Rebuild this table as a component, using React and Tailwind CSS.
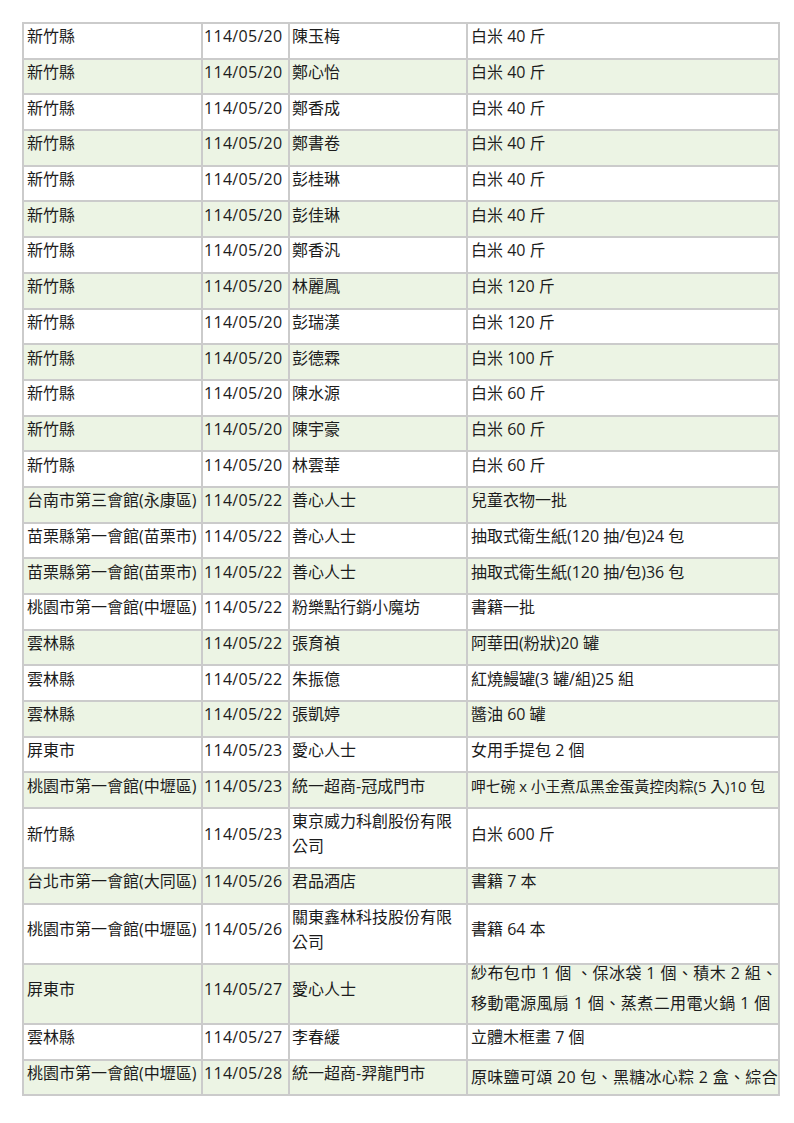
import React from 'react';

const rows = [
  { c: ['新竹縣', '114/05/20', '陳玉梅', '白米 40 斤'] },
  { c: ['新竹縣', '114/05/20', '鄭心怡', '白米 40 斤'] },
  { c: ['新竹縣', '114/05/20', '鄭香成', '白米 40 斤'] },
  { c: ['新竹縣', '114/05/20', '鄭書卷', '白米 40 斤'] },
  { c: ['新竹縣', '114/05/20', '彭桂琳', '白米 40 斤'] },
  { c: ['新竹縣', '114/05/20', '彭佳琳', '白米 40 斤'] },
  { c: ['新竹縣', '114/05/20', '鄭香汎', '白米 40 斤'] },
  { c: ['新竹縣', '114/05/20', '林麗鳳', '白米 120 斤'] },
  { c: ['新竹縣', '114/05/20', '彭瑞漢', '白米 120 斤'] },
  { c: ['新竹縣', '114/05/20', '彭德霖', '白米 100 斤'] },
  { c: ['新竹縣', '114/05/20', '陳水源', '白米 60 斤'] },
  { c: ['新竹縣', '114/05/20', '陳宇豪', '白米 60 斤'] },
  { c: ['新竹縣', '114/05/20', '林雲華', '白米 60 斤'] },
  { c: ['台南市第三會館(永康區)', '114/05/22', '善心人士', '兒童衣物一批'] },
  { c: ['苗栗縣第一會館(苗栗市)', '114/05/22', '善心人士', '抽取式衛生紙(120 抽/包)24 包'] },
  { c: ['苗栗縣第一會館(苗栗市)', '114/05/22', '善心人士', '抽取式衛生紙(120 抽/包)36 包'] },
  { c: ['桃園市第一會館(中壢區)', '114/05/22', '粉樂點行銷小魔坊', '書籍一批'] },
  { c: ['雲林縣', '114/05/22', '張育禎', '阿華田(粉狀)20 罐'] },
  { c: ['雲林縣', '114/05/22', '朱振億', '紅燒鰻罐(3 罐/組)25 組'] },
  { c: ['雲林縣', '114/05/22', '張凱婷', '醬油 60 罐'] },
  { c: ['屏東市', '114/05/23', '愛心人士', '女用手提包 2 個'] },
  { c: ['桃園市第一會館(中壢區)', '114/05/23', '統一超商-冠成門市', '呷七碗 x 小王煮瓜黑金蛋黃控肉粽(5 入)10 包'], small: true },
  { c: ['新竹縣', '114/05/23', ['東京威力科創股份有限', '公司'], '白米 600 斤'], tall: true },
  { c: ['台北市第一會館(大同區)', '114/05/26', '君品酒店', '書籍 7 本'] },
  { c: ['桃園市第一會館(中壢區)', '114/05/26', ['關東鑫林科技股份有限', '公司'], '書籍 64 本'], tall: true },
  {
    c: ['屏東市', '114/05/27', '愛心人士', ['紗布包巾 1 個 、保冰袋 1 個、積木 2 組、', '移動電源風扇 1 個、蒸煮二用電火鍋 1 個']],
    tall: true,
    loose: true,
  },
  { c: ['雲林縣', '114/05/27', '李春緩', '立體木框畫 7 個'] },
  { c: ['桃園市第一會館(中壢區)', '114/05/28', '統一超商-羿龍門市', '原味鹽可頌 20 包、黑糖冰心粽 2 盒、綜合'], clip: true },
];

const pads = ['pl-[3px]', 'pl-[1px]', 'pl-[2px]', 'pl-[3px]'];

function Cell({ value, col, row }) {
  const lines = Array.isArray(value) ? value : [value];
  const isLast = col === 3;
  let textCls = 'text-[16px] leading-[25px]';
  if (col === 1) textCls = 'text-[16px] leading-[25px] tracking-[0.3px]';
  if (isLast && row.small) textCls = 'text-[14.8px] leading-[25px]';
  if (isLast && row.loose) textCls = 'text-[16px] leading-[30px] -translate-y-[2px] tracking-[0.4px]';

  if (isLast && row.clip) {
    return (
      <div className={`border-l-2 border-t-2 border-[#cbcbcb] overflow-hidden whitespace-nowrap pt-[4px] ${pads[col]}`}>
        <div className="text-[16px] leading-[25px] tracking-[0.3px]">
          {lines.map((l, i) => (
            <div key={i}>{l}</div>
          ))}
        </div>
      </div>
    );
  }

  return (
    <div className={`flex items-center pb-[8px] border-l-2 border-t-2 border-[#cbcbcb] overflow-hidden whitespace-nowrap ${pads[col]}`}>
      <div className={textCls}>
        {lines.map((l, i) => (
          <div key={i}>{l}</div>
        ))}
      </div>
    </div>
  );
}

export default function App() {
  return (
    <div
      className="min-h-screen bg-white pt-[22px] pl-[22px] text-[#1c1c1c]"
      style={{ fontFamily: '"Open Sans", "Noto Sans CJK TC", sans-serif' }}
    >
      <div className="w-[758px] border-r-2 border-b-2 border-[#cbcbcb]">
        {rows.map((row, i) => (
          <div
            key={i}
            className={`grid grid-cols-[179px_87px_178px_312px] ${row.tall ? 'h-[60px]' : 'h-[35.7px]'} ${i % 2 === 1 ? 'bg-[#ecf4e4]' : 'bg-white'}`}
          >
            {row.c.map((v, j) => (
              <Cell key={j} value={v} col={j} row={row} />
            ))}
          </div>
        ))}
      </div>
    </div>
  );
}
